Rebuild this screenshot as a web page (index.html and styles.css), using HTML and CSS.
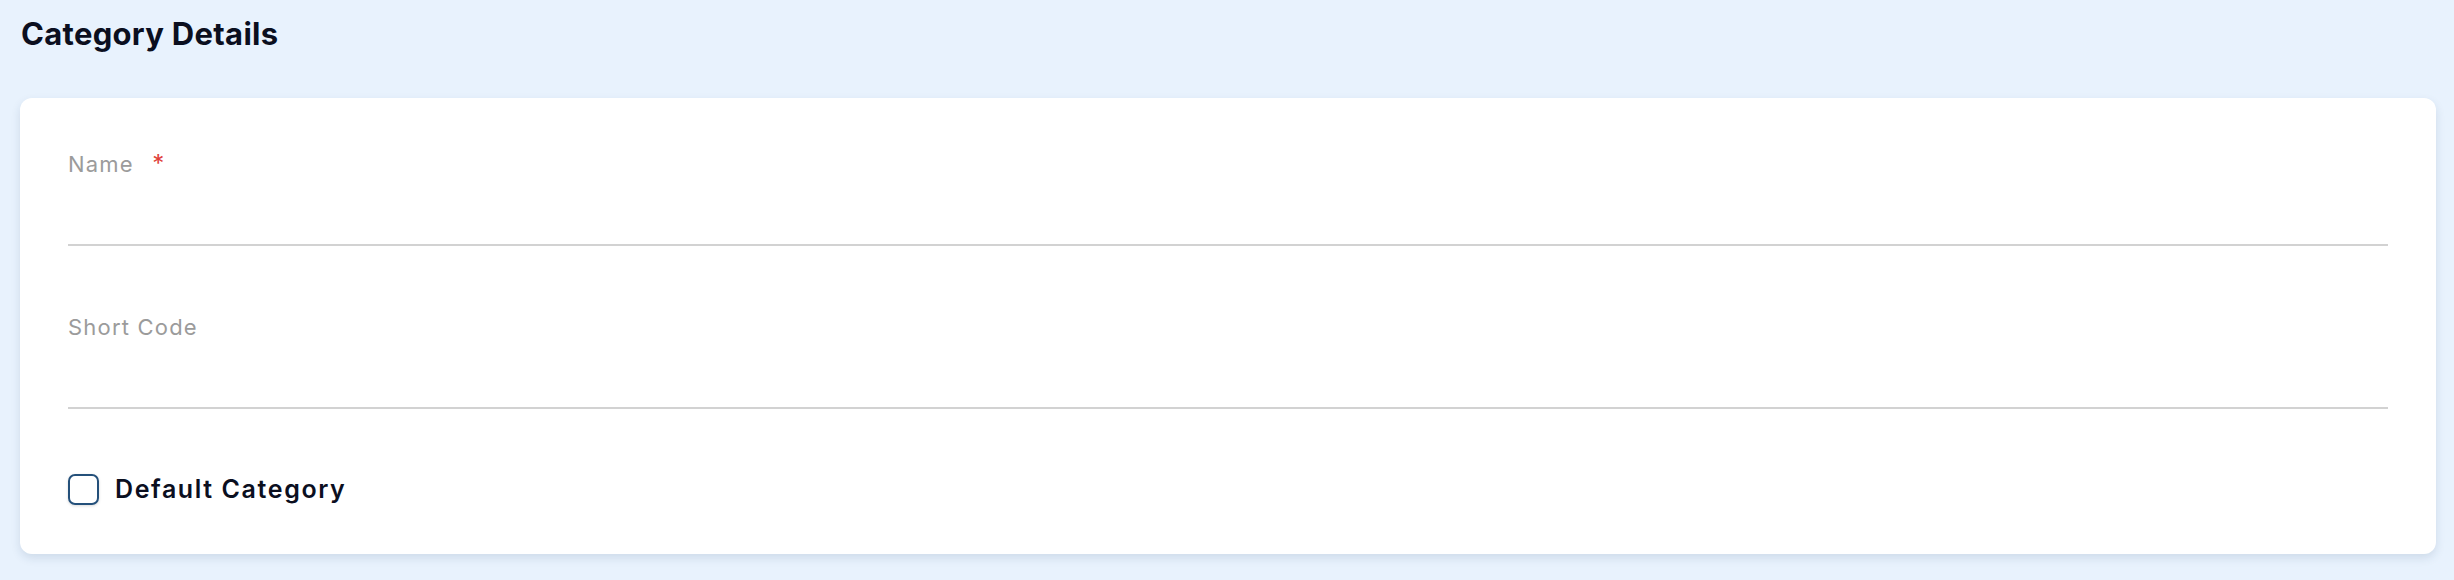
FILE: index.html
```html
<!DOCTYPE html>
<html lang="en">
<head>
<meta charset="utf-8">
<title>Category Details</title>
<link rel="stylesheet" href="styles.css">
</head>
<body>
<div class="page">
  <h2 class="page-title">Category Details</h2>
  <section class="card">
    <div class="field">
      <label class="field-label" for="name">Name <span class="req">*</span></label>
      <input class="field-input" id="name" type="text">
    </div>
    <div class="field">
      <label class="field-label" for="code">Short Code</label>
      <input class="field-input" id="code" type="text">
    </div>
    <label class="check">
      <span class="check-box"></span>
      <span class="check-label">Default Category</span>
    </label>
  </section>
</div>
</body>
</html>
```

FILE: styles.css
```css
html, body {
  margin: 0;
  padding: 0;
  background: #e8f2fd;
  font-family: Inter, "Open Sans", sans-serif;
}
.page {
  padding: 0 18px 26px 20px;
}
.page-title {
  margin: 0 0 44px 0;
  padding: 14px 0 0 1px;
  font-size: 31px;
  font-weight: 700;
  line-height: 40px;
  letter-spacing: 0.3px;
  color: #0b0f1f;
}
.card {
  background: #fff;
  border-radius: 12px;
  box-shadow: 0 4px 10px rgba(30, 60, 100, 0.13);
  padding: 53px 48px 49px 48px;
  display: flex;
  flex-direction: column;
}
.field {
  display: flex;
  flex-direction: column;
  margin-bottom: 68px;
}
.field + .field {
  margin-bottom: 65px;
}
.field-label {
  font-size: 22px;
  line-height: 26px;
  color: #9b9b9b;
  letter-spacing: 1.2px;
}
.req {
  color: #e0413a;
  margin-left: 11px;
  font-size: 24px;
}
.field-input {
  box-sizing: border-box;
  border: none;
  border-bottom: 2px solid #d2d2d2;
  height: 69px;
  padding: 0;
  outline: none;
  background: transparent;
  font: inherit;
}
.check {
  display: flex;
  align-items: center;
  gap: 16px;
  height: 31px;
}
.check-box {
  box-sizing: border-box;
  flex: none;
  width: 31px;
  height: 31px;
  border: 2px solid #24507a;
  border-radius: 7px;
  box-shadow: 0 1px 3px rgba(0,0,0,0.15);
}
.check-label {
  font-size: 25px;
  line-height: 31px;
  font-weight: 600;
  letter-spacing: 1.6px;
  color: #0b0f1f;
}
```
